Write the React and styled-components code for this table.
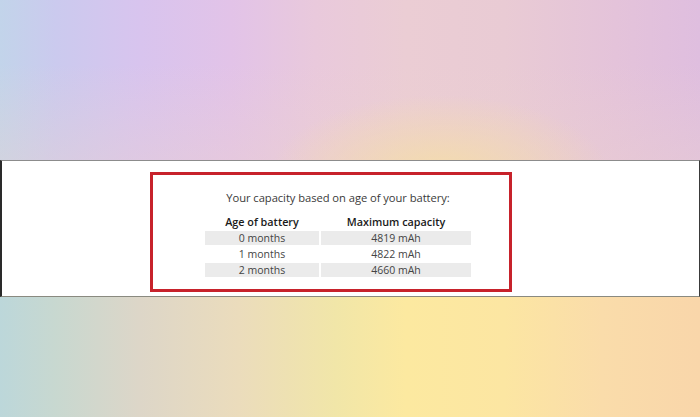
import React from "react";
import styled, { createGlobalStyle } from "styled-components";

const Global = createGlobalStyle`
  html, body { margin: 0; padding: 0; }
  body { font-family: "Open Sans", "Liberation Sans", sans-serif; }
`;

const Page = styled.div`
  width: 700px;
  height: 417px;
  display: flex;
  flex-direction: column;
  overflow: hidden;
`;

const TopBackdrop = styled.div`
  height: 160px;
  flex: none;
  background:
    radial-gradient(ellipse 170px 80px at 440px 175px, rgba(244, 220, 172, 1), rgba(244, 220, 172, 0) 100%),
    linear-gradient(to bottom, rgba(236, 210, 205, 0) 40%, rgba(236, 210, 205, 0.35) 100%),
    linear-gradient(
      to right,
      #c2d4ea 0%,
      #cbcaee 8%,
      #d8c4ee 20%,
      #e2c3e8 33%,
      #e9c9dc 45%,
      #ebcdd4 58%,
      #e9cbd4 72%,
      #e4c3da 88%,
      #dfbedf 100%
    );
`;

const Band = styled.section`
  height: 137px;
  flex: none;
  box-sizing: border-box;
  background: #ffffff;
  border-top: 1px solid #8c8c8c;
  border-bottom: 1px solid #8a8a80;
  border-left: 2px solid #2a2a2a;
  border-right: 1px solid #3a3a3a;
  padding: 11px 0 0 148px;
`;

const Frame = styled.div`
  width: 362px;
  height: 120px;
  box-sizing: border-box;
  border: 3px solid #c7222b;
  padding: 0 0 0 52px;
`;

const Content = styled.div`
  width: 266px;
  display: flex;
  flex-direction: column;
  align-items: stretch;
`;

const Title = styled.p`
  margin: 15px 0 0;
  height: 16px;
  line-height: 16px;
  font-size: 11.2px;
  color: #3a3a3a;
  text-align: center;
  letter-spacing: -0.05px;
`;

const Table = styled.div`
  margin-top: 9px;
  display: grid;
  grid-template-columns: 114px 150px;
  column-gap: 2px;
  row-gap: 2px;
`;

const HeadCell = styled.div`
  height: 14px;
  line-height: 14px;
  font-size: 10.8px;
  font-weight: 600;
  color: #1a1a1a;
  text-align: center;
`;

const Cell = styled.div`
  height: 14px;
  line-height: 14px;
  font-size: 10.5px;
  color: #444;
  text-align: center;
  background: ${(p) => (p.$shaded ? "#ebebeb" : "transparent")};
`;

const BottomBackdrop = styled.div`
  flex: 1;
  background: linear-gradient(
    to right,
    #bcd7da 0%,
    #c8d8d0 8%,
    #ddd6c8 20%,
    #ebdcbc 34%,
    #f1e6a8 48%,
    #fce9a0 58%,
    #fce6a2 72%,
    #fadcaa 86%,
    #f9d6aa 100%
  );
`;

const rows = [
  ["0 months", "4819 mAh"],
  ["1 months", "4822 mAh"],
  ["2 months", "4660 mAh"],
];

export default function App() {
  return (
    <>
      <Global />
      <Page>
        <TopBackdrop />
        <Band>
          <Frame>
            <Content>
              <Title>Your capacity based on age of your battery:</Title>
              <Table>
                <HeadCell>Age of battery</HeadCell>
                <HeadCell>Maximum capacity</HeadCell>
                {rows.map(([age, cap], i) => (
                  <React.Fragment key={age}>
                    <Cell $shaded={i % 2 === 0}>{age}</Cell>
                    <Cell $shaded={i % 2 === 0}>{cap}</Cell>
                  </React.Fragment>
                ))}
              </Table>
            </Content>
          </Frame>
        </Band>
        <BottomBackdrop />
      </Page>
    </>
  );
}
